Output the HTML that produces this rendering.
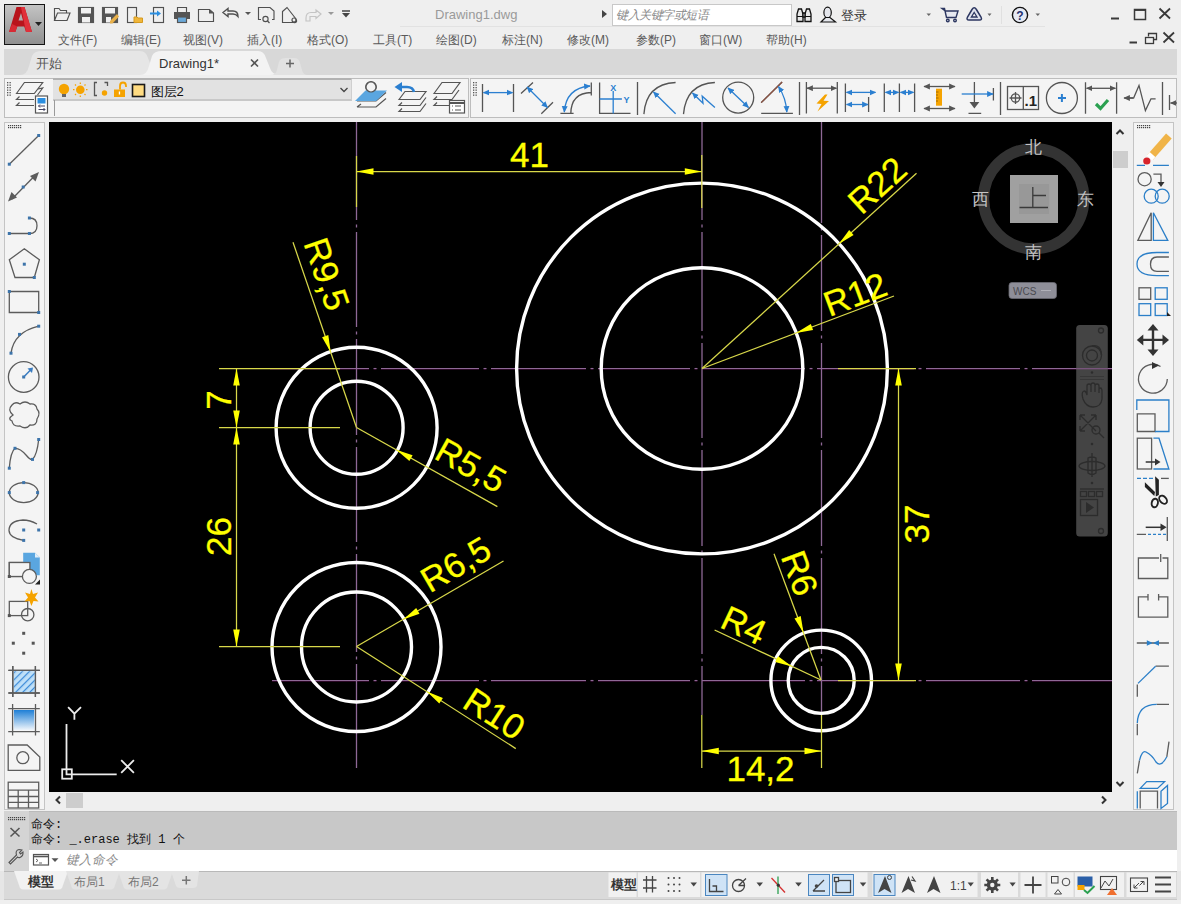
<!DOCTYPE html>
<html><head><meta charset="utf-8">
<style>
*{margin:0;padding:0;box-sizing:border-box}
html,body{width:1181px;height:904px;overflow:hidden;background:#efefef;font-family:"Liberation Sans",sans-serif;position:relative}
.a{position:absolute}
svg{position:absolute;left:0;top:0}
</style></head><body>
<!-- panels -->
<div class="a" style="left:4px;top:49px;width:1173px;height:26px;background:#d8d8d8"></div>
<div class="a" style="left:4px;top:78px;width:465px;height:40px;background:#f4f4f4;border:1px solid #bdbdbd"></div>
<div class="a" style="left:470px;top:78px;width:707px;height:40px;background:#f4f4f4;border:1px solid #bdbdbd"></div>
<div class="a" style="left:53px;top:78px;width:299px;height:23px;background:#e2e2e2;border-top:2px solid #b2b2b2;border-bottom:2px solid #c8c8c8;border-right:1px solid #cfcfcf"></div>
<div class="a" style="left:4px;top:122px;width:41px;height:688px;background:#f4f4f4;border:1px solid #c4c4c4"></div>
<div class="a" style="left:1133px;top:122px;width:41px;height:688px;background:#f4f4f4;border:1px solid #c4c4c4"></div>
<div class="a" style="left:49px;top:122px;width:1063px;height:670px;background:#000"></div>
<div class="a" style="left:1113px;top:151px;width:15px;height:17px;background:#cdcdcd"></div>
<div class="a" style="left:66px;top:793px;width:17px;height:15px;background:#cdcdcd"></div>
<div class="a" style="left:4px;top:811px;width:25px;height:60px;background:#d4d4d4"></div>
<div class="a" style="left:29px;top:811px;width:1148px;height:39px;background:#c8c8c8"></div>
<div class="a" style="left:29px;top:850px;width:1148px;height:21px;background:#fff"></div>
<div class="a" style="left:0;top:871px;width:1181px;height:33px;background:#e6e6e6"></div>
<svg class="cv" width="1181" height="904" style="position:absolute;left:0;top:0"><defs><clipPath id="cvc"><rect x="49" y="122" width="1063" height="670"/></clipPath></defs><g clip-path="url(#cvc)"><line x1="270" y1="369.5" x2="369" y2="369.5" stroke="#2a0824" stroke-width="1" /><line x1="270" y1="368.5" x2="369" y2="368.5" stroke="#8e6896" stroke-width="1.1" /><line x1="373.5" y1="369.5" x2="376.5" y2="369.5" stroke="#2a0824" stroke-width="1" /><line x1="373.5" y1="368.5" x2="376.5" y2="368.5" stroke="#8e6896" stroke-width="1.1" /><line x1="381" y1="369.5" x2="479" y2="369.5" stroke="#2a0824" stroke-width="1" /><line x1="381" y1="368.5" x2="479" y2="368.5" stroke="#8e6896" stroke-width="1.1" /><line x1="483.5" y1="369.5" x2="486.5" y2="369.5" stroke="#2a0824" stroke-width="1" /><line x1="483.5" y1="368.5" x2="486.5" y2="368.5" stroke="#8e6896" stroke-width="1.1" /><line x1="491" y1="369.5" x2="586" y2="369.5" stroke="#2a0824" stroke-width="1" /><line x1="491" y1="368.5" x2="586" y2="368.5" stroke="#8e6896" stroke-width="1.1" /><line x1="590.5" y1="369.5" x2="593.5" y2="369.5" stroke="#2a0824" stroke-width="1" /><line x1="590.5" y1="368.5" x2="593.5" y2="368.5" stroke="#8e6896" stroke-width="1.1" /><line x1="598" y1="369.5" x2="690" y2="369.5" stroke="#2a0824" stroke-width="1" /><line x1="598" y1="368.5" x2="690" y2="368.5" stroke="#8e6896" stroke-width="1.1" /><line x1="694.5" y1="369.5" x2="697.5" y2="369.5" stroke="#2a0824" stroke-width="1" /><line x1="694.5" y1="368.5" x2="697.5" y2="368.5" stroke="#8e6896" stroke-width="1.1" /><line x1="702" y1="369.5" x2="805" y2="369.5" stroke="#2a0824" stroke-width="1" /><line x1="702" y1="368.5" x2="805" y2="368.5" stroke="#8e6896" stroke-width="1.1" /><line x1="809.5" y1="369.5" x2="812.5" y2="369.5" stroke="#2a0824" stroke-width="1" /><line x1="809.5" y1="368.5" x2="812.5" y2="368.5" stroke="#8e6896" stroke-width="1.1" /><line x1="817" y1="369.5" x2="914" y2="369.5" stroke="#2a0824" stroke-width="1" /><line x1="817" y1="368.5" x2="914" y2="368.5" stroke="#8e6896" stroke-width="1.1" /><line x1="918.5" y1="369.5" x2="921.5" y2="369.5" stroke="#2a0824" stroke-width="1" /><line x1="918.5" y1="368.5" x2="921.5" y2="368.5" stroke="#8e6896" stroke-width="1.1" /><line x1="926" y1="369.5" x2="1020" y2="369.5" stroke="#2a0824" stroke-width="1" /><line x1="926" y1="368.5" x2="1020" y2="368.5" stroke="#8e6896" stroke-width="1.1" /><line x1="1024.5" y1="369.5" x2="1027.5" y2="369.5" stroke="#2a0824" stroke-width="1" /><line x1="1024.5" y1="368.5" x2="1027.5" y2="368.5" stroke="#8e6896" stroke-width="1.1" /><line x1="1032" y1="369.5" x2="1112" y2="369.5" stroke="#2a0824" stroke-width="1" /><line x1="1032" y1="368.5" x2="1112" y2="368.5" stroke="#8e6896" stroke-width="1.1" /><line x1="272" y1="681.5" x2="369" y2="681.5" stroke="#2a0824" stroke-width="1" /><line x1="272" y1="680.5" x2="369" y2="680.5" stroke="#8e6896" stroke-width="1.1" /><line x1="373.5" y1="681.5" x2="376.5" y2="681.5" stroke="#2a0824" stroke-width="1" /><line x1="373.5" y1="680.5" x2="376.5" y2="680.5" stroke="#8e6896" stroke-width="1.1" /><line x1="381" y1="681.5" x2="479" y2="681.5" stroke="#2a0824" stroke-width="1" /><line x1="381" y1="680.5" x2="479" y2="680.5" stroke="#8e6896" stroke-width="1.1" /><line x1="483.5" y1="681.5" x2="486.5" y2="681.5" stroke="#2a0824" stroke-width="1" /><line x1="483.5" y1="680.5" x2="486.5" y2="680.5" stroke="#8e6896" stroke-width="1.1" /><line x1="491" y1="681.5" x2="586" y2="681.5" stroke="#2a0824" stroke-width="1" /><line x1="491" y1="680.5" x2="586" y2="680.5" stroke="#8e6896" stroke-width="1.1" /><line x1="590.5" y1="681.5" x2="593.5" y2="681.5" stroke="#2a0824" stroke-width="1" /><line x1="590.5" y1="680.5" x2="593.5" y2="680.5" stroke="#8e6896" stroke-width="1.1" /><line x1="598" y1="681.5" x2="690" y2="681.5" stroke="#2a0824" stroke-width="1" /><line x1="598" y1="680.5" x2="690" y2="680.5" stroke="#8e6896" stroke-width="1.1" /><line x1="694.5" y1="681.5" x2="697.5" y2="681.5" stroke="#2a0824" stroke-width="1" /><line x1="694.5" y1="680.5" x2="697.5" y2="680.5" stroke="#8e6896" stroke-width="1.1" /><line x1="702" y1="681.5" x2="805" y2="681.5" stroke="#2a0824" stroke-width="1" /><line x1="702" y1="680.5" x2="805" y2="680.5" stroke="#8e6896" stroke-width="1.1" /><line x1="809.5" y1="681.5" x2="812.5" y2="681.5" stroke="#2a0824" stroke-width="1" /><line x1="809.5" y1="680.5" x2="812.5" y2="680.5" stroke="#8e6896" stroke-width="1.1" /><line x1="817" y1="681.5" x2="914" y2="681.5" stroke="#2a0824" stroke-width="1" /><line x1="817" y1="680.5" x2="914" y2="680.5" stroke="#8e6896" stroke-width="1.1" /><line x1="918.5" y1="681.5" x2="921.5" y2="681.5" stroke="#2a0824" stroke-width="1" /><line x1="918.5" y1="680.5" x2="921.5" y2="680.5" stroke="#8e6896" stroke-width="1.1" /><line x1="926" y1="681.5" x2="1020" y2="681.5" stroke="#2a0824" stroke-width="1" /><line x1="926" y1="680.5" x2="1020" y2="680.5" stroke="#8e6896" stroke-width="1.1" /><line x1="1024.5" y1="681.5" x2="1027.5" y2="681.5" stroke="#2a0824" stroke-width="1" /><line x1="1024.5" y1="680.5" x2="1027.5" y2="680.5" stroke="#8e6896" stroke-width="1.1" /><line x1="1032" y1="681.5" x2="1112" y2="681.5" stroke="#2a0824" stroke-width="1" /><line x1="1032" y1="680.5" x2="1112" y2="680.5" stroke="#8e6896" stroke-width="1.1" /><line x1="356.5" y1="122" x2="356.5" y2="220" stroke="#8e6896" stroke-width="1.3" /><line x1="356.5" y1="224.5" x2="356.5" y2="227.5" stroke="#8e6896" stroke-width="1.3" /><line x1="356.5" y1="232" x2="356.5" y2="327" stroke="#8e6896" stroke-width="1.3" /><line x1="356.5" y1="331.5" x2="356.5" y2="334.5" stroke="#8e6896" stroke-width="1.3" /><line x1="356.5" y1="339" x2="356.5" y2="435" stroke="#8e6896" stroke-width="1.3" /><line x1="356.5" y1="439.5" x2="356.5" y2="442.5" stroke="#8e6896" stroke-width="1.3" /><line x1="356.5" y1="447" x2="356.5" y2="542" stroke="#8e6896" stroke-width="1.3" /><line x1="356.5" y1="546.5" x2="356.5" y2="549.5" stroke="#8e6896" stroke-width="1.3" /><line x1="356.5" y1="554" x2="356.5" y2="652" stroke="#8e6896" stroke-width="1.3" /><line x1="356.5" y1="656.5" x2="356.5" y2="659.5" stroke="#8e6896" stroke-width="1.3" /><line x1="356.5" y1="664" x2="356.5" y2="768" stroke="#8e6896" stroke-width="1.3" /><line x1="702" y1="122" x2="702" y2="220" stroke="#8e6896" stroke-width="1.3" /><line x1="702" y1="224.5" x2="702" y2="227.5" stroke="#8e6896" stroke-width="1.3" /><line x1="702" y1="232" x2="702" y2="331" stroke="#8e6896" stroke-width="1.3" /><line x1="702" y1="335.5" x2="702" y2="338.5" stroke="#8e6896" stroke-width="1.3" /><line x1="702" y1="343" x2="702" y2="438" stroke="#8e6896" stroke-width="1.3" /><line x1="702" y1="442.5" x2="702" y2="445.5" stroke="#8e6896" stroke-width="1.3" /><line x1="702" y1="450" x2="702" y2="546" stroke="#8e6896" stroke-width="1.3" /><line x1="702" y1="550.5" x2="702" y2="553.5" stroke="#8e6896" stroke-width="1.3" /><line x1="702" y1="558" x2="702" y2="654" stroke="#8e6896" stroke-width="1.3" /><line x1="702" y1="658.5" x2="702" y2="661.5" stroke="#8e6896" stroke-width="1.3" /><line x1="702" y1="666" x2="702" y2="715" stroke="#8e6896" stroke-width="1.3" /><line x1="821.5" y1="122" x2="821.5" y2="223" stroke="#8e6896" stroke-width="1.3" /><line x1="821.5" y1="227.5" x2="821.5" y2="230.5" stroke="#8e6896" stroke-width="1.3" /><line x1="821.5" y1="235" x2="821.5" y2="331" stroke="#8e6896" stroke-width="1.3" /><line x1="821.5" y1="335.5" x2="821.5" y2="338.5" stroke="#8e6896" stroke-width="1.3" /><line x1="821.5" y1="343" x2="821.5" y2="438" stroke="#8e6896" stroke-width="1.3" /><line x1="821.5" y1="442.5" x2="821.5" y2="445.5" stroke="#8e6896" stroke-width="1.3" /><line x1="821.5" y1="450" x2="821.5" y2="546" stroke="#8e6896" stroke-width="1.3" /><line x1="821.5" y1="550.5" x2="821.5" y2="553.5" stroke="#8e6896" stroke-width="1.3" /><line x1="821.5" y1="558" x2="821.5" y2="654" stroke="#8e6896" stroke-width="1.3" /><line x1="821.5" y1="658.5" x2="821.5" y2="661.5" stroke="#8e6896" stroke-width="1.3" /><line x1="821.5" y1="666" x2="821.5" y2="715" stroke="#8e6896" stroke-width="1.3" /><circle cx="702" cy="368.5" r="185.4" fill="none" stroke="#fff" stroke-width="3.4"/><circle cx="702" cy="368.5" r="100.8" fill="none" stroke="#fff" stroke-width="3.4"/><circle cx="356.6" cy="427.7" r="80.5" fill="none" stroke="#fff" stroke-width="3.4"/><circle cx="356.6" cy="427.7" r="46.5" fill="none" stroke="#fff" stroke-width="3.4"/><circle cx="356.5" cy="647" r="84.5" fill="none" stroke="#fff" stroke-width="3.4"/><circle cx="356.5" cy="647" r="55" fill="none" stroke="#fff" stroke-width="3.4"/><circle cx="821.2" cy="680.4" r="50.3" fill="none" stroke="#fff" stroke-width="3.4"/><circle cx="821.2" cy="680.4" r="33" fill="none" stroke="#fff" stroke-width="3.4"/><line x1="356.5" y1="156" x2="356.5" y2="207" stroke="#d8d84a" stroke-width="1.25" /><line x1="701.8" y1="155" x2="701.8" y2="208" stroke="#d8d84a" stroke-width="1.25" /><line x1="356.5" y1="171.5" x2="701.8" y2="171.5" stroke="#d8d84a" stroke-width="1.25" /><polygon points="356.5,171.5 373.5,174.8 373.5,168.2" fill="#ffff00"/><polygon points="701.8,171.5 684.8,168.2 684.8,174.8" fill="#ffff00"/><text transform="translate(529.5,154.5) rotate(0)" x="0" y="12.5" text-anchor="middle" font-size="35" fill="#ffff00" stroke="#ffff00" stroke-width="0.3" font-family="Liberation Sans">41</text><line x1="219" y1="368.5" x2="340" y2="368.5" stroke="#d8d84a" stroke-width="1.25" /><line x1="219" y1="427.5" x2="340" y2="427.5" stroke="#d8d84a" stroke-width="1.25" /><line x1="219" y1="646.5" x2="340" y2="646.5" stroke="#d8d84a" stroke-width="1.25" /><line x1="236.5" y1="368.5" x2="236.5" y2="646.5" stroke="#d8d84a" stroke-width="1.25" /><polygon points="236.5,368.5 233.2,385.5 239.8,385.5" fill="#ffff00"/><polygon points="236.5,427.5 239.8,410.5 233.2,410.5" fill="#ffff00"/><polygon points="236.5,427.5 233.2,444.5 239.8,444.5" fill="#ffff00"/><polygon points="236.5,646.5 239.8,629.5 233.2,629.5" fill="#ffff00"/><text transform="translate(218,400) rotate(-90)" x="0" y="12.5" text-anchor="middle" font-size="35" fill="#ffff00" stroke="#ffff00" stroke-width="0.3" font-family="Liberation Sans">7</text><text transform="translate(218,536.5) rotate(-90)" x="0" y="12.5" text-anchor="middle" font-size="35" fill="#ffff00" stroke="#ffff00" stroke-width="0.3" font-family="Liberation Sans">26</text><line x1="838" y1="368.5" x2="916" y2="368.5" stroke="#d8d84a" stroke-width="1.25" /><line x1="838" y1="680.5" x2="916" y2="680.5" stroke="#d8d84a" stroke-width="1.25" /><line x1="898.5" y1="368.5" x2="898.5" y2="680.5" stroke="#d8d84a" stroke-width="1.25" /><polygon points="898.5,368.5 895.2,385.5 901.8,385.5" fill="#ffff00"/><polygon points="898.5,680.5 901.8,663.5 895.2,663.5" fill="#ffff00"/><text transform="translate(916.5,524) rotate(-90)" x="0" y="12.5" text-anchor="middle" font-size="35" fill="#ffff00" stroke="#ffff00" stroke-width="0.3" font-family="Liberation Sans">37</text><line x1="701.8" y1="715" x2="701.8" y2="768" stroke="#d8d84a" stroke-width="1.25" /><line x1="821.5" y1="715" x2="821.5" y2="768" stroke="#d8d84a" stroke-width="1.25" /><line x1="701.8" y1="751" x2="821.5" y2="751" stroke="#d8d84a" stroke-width="1.25" /><polygon points="701.8,751.0 718.8,754.3 718.8,747.7" fill="#ffff00"/><polygon points="821.5,751.0 804.5,747.7 804.5,754.3" fill="#ffff00"/><text transform="translate(760.5,768.5) rotate(0)" x="0" y="12.5" text-anchor="middle" font-size="35" fill="#ffff00" stroke="#ffff00" stroke-width="0.3" font-family="Liberation Sans">14,2</text><line x1="702" y1="368.5" x2="916.5" y2="173.3" stroke="#d8d84a" stroke-width="1.25" /><polygon points="838.8,244.0 853.6,235.0 849.2,230.1" fill="#ffff00"/><text transform="translate(877,185) rotate(-42.2)" x="0" y="12.5" text-anchor="middle" font-size="35" fill="#ffff00" stroke="#ffff00" stroke-width="0.3" font-family="Liberation Sans">R22</text><line x1="702" y1="368.5" x2="894" y2="296" stroke="#d8d84a" stroke-width="1.25" /><polygon points="796.0,333.0 813.1,330.1 810.8,323.9" fill="#ffff00"/><text transform="translate(855,294) rotate(-20.6)" x="0" y="12.5" text-anchor="middle" font-size="35" fill="#ffff00" stroke="#ffff00" stroke-width="0.3" font-family="Liberation Sans">R12</text><line x1="356.5" y1="427.5" x2="293" y2="242.3" stroke="#d8d84a" stroke-width="1.25" /><polygon points="330.7,352.3 328.3,335.1 322.1,337.3" fill="#ffff00"/><text transform="translate(327,274) rotate(71)" x="0" y="12.5" text-anchor="middle" font-size="35" fill="#ffff00" stroke="#ffff00" stroke-width="0.3" font-family="Liberation Sans">R9,5</text><line x1="356.5" y1="427.5" x2="497.4" y2="506.6" stroke="#d8d84a" stroke-width="1.25" /><polygon points="396.2,449.8 409.4,461.0 412.6,455.2" fill="#ffff00"/><text transform="translate(471,465) rotate(29.3)" x="0" y="12.5" text-anchor="middle" font-size="35" fill="#ffff00" stroke="#ffff00" stroke-width="0.3" font-family="Liberation Sans">R5,5</text><line x1="356.5" y1="646.5" x2="503.5" y2="561" stroke="#d8d84a" stroke-width="1.25" /><polygon points="403.2,619.4 419.5,613.7 416.2,608.0" fill="#ffff00"/><text transform="translate(455.5,564) rotate(-30.2)" x="0" y="12.5" text-anchor="middle" font-size="35" fill="#ffff00" stroke="#ffff00" stroke-width="0.3" font-family="Liberation Sans">R6,5</text><line x1="356.5" y1="646.5" x2="515.8" y2="748.6" stroke="#d8d84a" stroke-width="1.25" /><polygon points="426.8,691.6 439.3,703.5 442.9,698.0" fill="#ffff00"/><text transform="translate(494.5,713.5) rotate(32.7)" x="0" y="12.5" text-anchor="middle" font-size="35" fill="#ffff00" stroke="#ffff00" stroke-width="0.3" font-family="Liberation Sans">R10</text><line x1="821" y1="680" x2="774" y2="553.7" stroke="#d8d84a" stroke-width="1.25" /><polygon points="803.6,633.1 800.7,616.1 794.5,618.4" fill="#ffff00"/><text transform="translate(800,573) rotate(69.6)" x="0" y="12.5" text-anchor="middle" font-size="35" fill="#ffff00" stroke="#ffff00" stroke-width="0.3" font-family="Liberation Sans">R6</text><line x1="821" y1="680" x2="714.6" y2="630" stroke="#d8d84a" stroke-width="1.25" /><polygon points="792.0,666.4 778.1,656.2 775.2,662.1" fill="#ffff00"/><text transform="translate(744,625) rotate(25.2)" x="0" y="12.5" text-anchor="middle" font-size="35" fill="#ffff00" stroke="#ffff00" stroke-width="0.3" font-family="Liberation Sans">R4</text></g></svg>
<!-- title bar -->
<div class="a" style="left:4px;top:4px;width:41px;height:41px;border:1.5px solid #151515;background:linear-gradient(#c4c4c4,#a4a4a4 60%,#909090)"></div>
<svg width="1181" height="50">
<polygon points="9,32 16.5,7 24.5,7 32,32 26,32 24.2,26.5 17.3,26.5 15.3,32" fill="#b8141c"/>
<polygon points="21,7 24.5,7 32,32 26,32" fill="#e0303a"/>
<polygon points="12,24 17.3,26.5 15.3,32 9,32" fill="#d82a34"/>
<polygon points="18.5,20.5 21,13 23,20.5" fill="#b0b0b0"/>
<polygon points="35,22 42,22 38.5,26" fill="#222"/>
<!-- QAT icons -->
<g fill="none" stroke="#505050" stroke-width="1.15">
<!-- open -->
<path d="M54.5,20.5 V8.5 H59 L60.5,10.5 H66.5 V12.5 M54.5,20.5 L57.5,13 H70 L67,20.5 Z"/>
<!-- save -->
<rect x="78.5" y="7.5" width="15" height="15" fill="#555" stroke="#555"/>
<rect x="81" y="8" width="10" height="5.5" fill="#f0f0f0" stroke="none"/>
<rect x="82" y="17" width="8" height="5.5" fill="#f0f0f0" stroke="none"/>
<!-- saveas -->
<rect x="102.5" y="7.5" width="15" height="15" fill="#555" stroke="#555"/>
<rect x="105" y="8" width="10" height="5.5" fill="#f0f0f0" stroke="none"/>
<rect x="106" y="17" width="5" height="5.5" fill="#f0f0f0" stroke="none"/>
<polygon points="110,21 117,14 119,16.5 112.5,23.5 110,23.5" fill="#e8b04a" stroke="none"/>
<!-- open mobile -->
<rect x="127.5" y="7.5" width="9" height="15" />
<path d="M134,17 H137 L138,18 H142.5 V22.5 H134 Z" fill="#f0b63a" stroke="#d59a20" stroke-width="1"/>
<!-- export -->
<rect x="153.5" y="7.5" width="10" height="15"/>
<path d="M150,13.5 H158" stroke="#2b8ee0" stroke-width="2"/>
<polygon points="157,10.5 161,13.5 157,16.5" fill="#2b8ee0" stroke="none"/>
<!-- print -->
<path d="M177.5,12 V7.5 H186.5 V12"/>
<rect x="174" y="12" width="16" height="7" fill="#555" stroke="none"/>
<rect x="177.5" y="17" width="9" height="5.5" fill="#6aa8d8" stroke="#555"/>
<!-- new sheet -->
<path d="M198.5,9.5 H209.5 L213.5,13 V21.5 H198.5 Z"/>
<polygon points="209,9 214,13.5 209,13.5" fill="#555" stroke="none"/>
<!-- undo -->
<path d="M223,12.5 L228,8.5 V11 H233 Q238,11 238,16.5 Q236,14 233,14 H228 V16.5 Z" stroke-width="1.4"/>
<polygon points="245,12 251,12 248,15" fill="#555" stroke="none"/>
<!-- plot preview -->
<path d="M261,19.5 H258.5 V7.5 H270 L274,11 V19.5 H272"/>
<circle cx="265.5" cy="19" r="2.6"/>
<path d="M267.5,21 L269.5,23"/>
<!-- publish -->
<path d="M282.5,11.5 L287,7.5 L296,19 Q298,23 293.5,22.5 H282.5 Z"/>
<circle cx="294" cy="20" r="2"/>
<!-- redo gray -->
<path d="M321,14 L316,10 V12.5 H311 Q306,12.5 306,18 V21 H310 V16.5 H316 V18.5 Z" stroke="#c4c4c4"/>
<polygon points="328,12 334,12 331,15" fill="#999" stroke="none"/>
<path d="M342,11 H350" stroke="#444" stroke-width="1.5"/>
<polygon points="342,13 350,13 346,17.5" fill="#444" stroke="none"/>
</g>
<text x="435" y="19" font-size="13" fill="#9a9a9a" font-family="Liberation Sans">Drawing1.dwg</text>
<polygon points="602,10 607,14 602,18" fill="#444"/>
</svg>
<div class="a" style="left:612px;top:4px;width:180px;height:22px;background:#fff;border:1px solid #c8c8c8"></div>
<div class="a" style="left:616px;top:7px;font-size:12px;color:#888;font-style:italic;letter-spacing:-0.5px">键入关键字或短语</div>
<svg width="1181" height="50">
<g fill="#e8e8e8" stroke="#111" stroke-width="1.3">
<path d="M797,21.5 V14 L798.5,9 H801.5 L803,14 V21.5 Z"/><path d="M805,21.5 V14 L806.5,9 H809.5 L811,14 V21.5 Z"/>
<path d="M803,13 H805 V17 H803 Z"/>
</g>
<path d="M797,16.5 H803 M805,16.5 H811" stroke="#111" stroke-width="1"/>
<g fill="#e4e6ec" stroke="#111" stroke-width="1.2">
<ellipse cx="827.6" cy="12.5" rx="3.7" ry="5.3"/>
<path d="M825.5,17.5 L821,22 H835.5 L830,17.5 Z"/>
</g>
<text x="841" y="19.5" font-size="13" fill="#333" font-family="Liberation Sans">登录</text>
<polygon points="926.5,13.5 931,13.5 928.8,16" fill="#666"/>
<!-- cart -->
<g fill="#e6e8f0" stroke="#2c3660" stroke-width="1.4">
<path d="M942,8.5 H944.5 L946.5,17.5 H956 L958,11 H945.5 Z"/>
<circle cx="947.8" cy="20.5" r="1.3"/><circle cx="955" cy="20.5" r="1.3"/>
</g>
<!-- a360 -->
<path d="M972,9.5 Q974.2,6 976.4,9.5 L981,17 Q982.5,20 979.5,20 H969 Q966,20 967.5,17 Z" fill="#dfe3ee" stroke="#2c3660" stroke-width="1.5"/>
<path d="M974.2,12.5 L977,17 H971.4 Z" fill="#f0f0f0" stroke="#2c3660" stroke-width="1.3"/>
<polygon points="987.5,13.5 991.5,13.5 989.5,16" fill="#666"/>
<line x1="1001.5" y1="6" x2="1001.5" y2="24" stroke="#e0e0e0"/>
<circle cx="1020" cy="15" r="7.6" fill="#e6eaf4" stroke="#111" stroke-width="1.4"/>
<text x="1020" y="19.5" font-size="12" font-weight="bold" fill="#223070" text-anchor="middle" font-family="Liberation Sans">?</text>
<polygon points="1035.5,13.5 1040,13.5 1037.8,16" fill="#666"/>
<line x1="400" y1="26.5" x2="1045" y2="26.5" stroke="#e2e2e2"/>
<!-- window controls -->
<g stroke="#3a3a3a" stroke-width="1.5" fill="none">
<path d="M1111,18.5 H1119" stroke-width="2"/>
<rect x="1134.5" y="9.5" width="11" height="10"/><path d="M1134.5,10.2 H1145.5" stroke-width="1.5"/>
<path d="M1159.5,8.5 L1170,18.5 M1170,8.5 L1159.5,18.5" stroke-width="1.8"/>
<path d="M1129.5,42.5 H1137" stroke-width="2"/>
<rect x="1145.5" y="37.5" width="8" height="6" stroke-width="1.3"/><path d="M1148.5,36.5 V33.5 H1156.5 V39.5 H1154" stroke-width="1.3"/>
<path d="M1163.5,32.5 L1174,42.5 M1174,32.5 L1163.5,42.5" stroke-width="1.8"/>
</g>
</svg>
<!-- menu -->
<div class="a" style="top:31.5px;left:0;width:820px;height:18px;font-size:12px;color:#5a5a5a;white-space:nowrap">
<span class="a" style="left:58px">文件(F)</span><span class="a" style="left:121px">编辑(E)</span><span class="a" style="left:183px">视图(V)</span><span class="a" style="left:247px">插入(I)</span><span class="a" style="left:307px">格式(O)</span><span class="a" style="left:373px">工具(T)</span><span class="a" style="left:436px">绘图(D)</span><span class="a" style="left:502px">标注(N)</span><span class="a" style="left:567px">修改(M)</span><span class="a" style="left:636px">参数(P)</span><span class="a" style="left:699px">窗口(W)</span><span class="a" style="left:766px">帮助(H)</span>
</div>
<!-- tabs -->
<svg width="1181" height="80">
<path d="M20,75 Q27,75 29,66 L32,56 Q34,51 42,51 H140 Q146,51 148,58 L152,68 Q154,75 162,75 Z" fill="#e6e6e6"/>
<path d="M140,75 Q147,75 149,66 L152,56 Q154,51 162,51 H258 Q264,51 266,58 L270,68 Q272,75 280,75 Z" fill="#f3f3f3"/>
<path d="M270,75 Q276,75 277,70 L279,62 Q280,58 286,58 H294 Q299,58 300,63 L302,70 Q303,75 308,75 Z" fill="#e2e2e2"/>
<path d="M251,59.5 L258,66.5 M258,59.5 L251,66.5" stroke="#555" stroke-width="1.6"/>
<path d="M290,59.5 V67.5 M286,63.5 H294" stroke="#666" stroke-width="1.5"/>
</svg>
<div class="a" style="left:36px;top:56px;font-size:12.5px;color:#555">开始</div>
<div class="a" style="left:159px;top:56px;font-size:13px;color:#333">Drawing1*</div>

<div class="a" style="left:150.5px;top:82.5px;font-size:13px;color:#111">图层2</div>
<svg width="1181" height="120">
<defs>
<pattern id="grip" width="2.8" height="2.6" patternUnits="userSpaceOnUse"><rect width="1.6" height="1.6" fill="#4a4a4a"/></pattern>
<marker id="ab" viewBox="0 0 10 10" refX="9" refY="5" markerWidth="5" markerHeight="5" orient="auto-start-reverse"><path d="M10,5 L0,0.5 L0,9.5 Z" fill="#2b7fd0"/></marker>
<marker id="ag" viewBox="0 0 10 10" refX="9" refY="5" markerWidth="5" markerHeight="5" orient="auto-start-reverse"><path d="M10,5 L0,0.5 L0,9.5 Z" fill="#555"/></marker>
</defs>
<rect x="7" y="82.0" width="1.3" height="1.3" fill="#555"/><rect x="7" y="84.5" width="1.3" height="1.3" fill="#555"/><rect x="7" y="87.0" width="1.3" height="1.3" fill="#555"/><rect x="7" y="89.5" width="1.3" height="1.3" fill="#555"/><rect x="7" y="92.0" width="1.3" height="1.3" fill="#555"/><rect x="7" y="94.5" width="1.3" height="1.3" fill="#555"/><rect x="9.5" y="82.0" width="1.3" height="1.3" fill="#555"/><rect x="9.5" y="84.5" width="1.3" height="1.3" fill="#555"/><rect x="9.5" y="87.0" width="1.3" height="1.3" fill="#555"/><rect x="9.5" y="89.5" width="1.3" height="1.3" fill="#555"/><rect x="9.5" y="92.0" width="1.3" height="1.3" fill="#555"/><rect x="9.5" y="94.5" width="1.3" height="1.3" fill="#555"/>
<rect x="473" y="82.0" width="1.3" height="1.3" fill="#555"/><rect x="473" y="84.5" width="1.3" height="1.3" fill="#555"/><rect x="473" y="87.0" width="1.3" height="1.3" fill="#555"/><rect x="473" y="89.5" width="1.3" height="1.3" fill="#555"/><rect x="473" y="92.0" width="1.3" height="1.3" fill="#555"/><rect x="473" y="94.5" width="1.3" height="1.3" fill="#555"/><rect x="475.5" y="82.0" width="1.3" height="1.3" fill="#555"/><rect x="475.5" y="84.5" width="1.3" height="1.3" fill="#555"/><rect x="475.5" y="87.0" width="1.3" height="1.3" fill="#555"/><rect x="475.5" y="89.5" width="1.3" height="1.3" fill="#555"/><rect x="475.5" y="92.0" width="1.3" height="1.3" fill="#555"/><rect x="475.5" y="94.5" width="1.3" height="1.3" fill="#555"/>
<g fill="none" stroke="#555" stroke-width="1.2">
<!-- layer properties -->
<path d="M16.5,93.5 L24.4,82.5 H42.7 L34.3,93.5 Z"/>
<path d="M38,89 L42.7,88 L37.5,95"/>
<path d="M19.5,96.5 L16.5,99.5 H34"/><path d="M19.5,102.5 L16.5,105.5 H34"/>
<rect x="35.5" y="96" width="12" height="17" fill="#fff"/>
<rect x="37.5" y="98" width="8" height="5.5" fill="#2b8ee0" stroke="none"/>
<path d="M38.5,106 H45 M40,104.5 L38.5,106 L40,107.5 M38.5,109.5 H45 M43.5,108 L45,109.5 L43.5,111" stroke="#446" stroke-width="1"/>
</g>
<line x1="54.5" y1="100" x2="54.5" y2="116" stroke="#9a9a9a"/>
<!-- bulb -->
<circle cx="64" cy="89" r="5.2" fill="#f5a300"/><rect x="62" y="94" width="4" height="3" fill="#666"/>
<!-- sun -->
<circle cx="80.3" cy="89.7" r="4.3" fill="#f5a300"/>
<g stroke="#f5a300" stroke-width="1.2"><path d="M80.3,82.5 V84 M80.3,95.5 V97 M73,89.7 H74.5 M86,89.7 H87.5 M75,84.5 L76,85.5 M84.5,94 L85.5,95 M85.5,84.5 L84.5,85.5 M76,94 L75,95"/></g>
<!-- vp freeze -->
<g fill="none" stroke="#555" stroke-width="1.3"><path d="M97,82.5 H94.5 V95.5 H97 M104.5,82.5 H107.5 V86"/></g>
<circle cx="104.5" cy="93" r="2.7" fill="#f5a300"/>
<!-- lock -->
<rect x="114" y="89.5" width="11" height="7.5" fill="#f5a300"/>
<path d="M120,89.5 V86 Q120,82.5 123,82.5 Q126,82.5 126,86 V87" fill="none" stroke="#f5a300" stroke-width="1.8"/>
<rect x="118.8" y="91.5" width="1.3" height="3" fill="#fff"/>
<!-- color sq -->
<rect x="132.5" y="84.5" width="12" height="12" fill="#ffdc82" stroke="#1a1a1a" stroke-width="1.6"/>
<path d="M340.5,88 L344,91.5 L347.5,88" fill="none" stroke="#444" stroke-width="1.3"/>
<!-- make current -->
<g fill="none" stroke="#555" stroke-width="1.2">
<circle cx="371" cy="87" r="5.3" fill="#f3f3f3"/>
<path d="M357,101 L361,98 M357,101 H376 L386,92.5 M357,107 L361,104 M357,107 H376 L386,98.5"/>
</g>
<polygon points="355,101 365.5,90.5 387,90.5 376.2,101" fill="#5aa6e0"/>
<circle cx="371" cy="87" r="5" fill="#f3f3f3" stroke="#555" stroke-width="1.2"/>
<!-- previous -->
<g fill="none" stroke="#555" stroke-width="1.2">
<path d="M399,99.5 L405,91.5 H426 L420,99.5 Z"/><path d="M402,102.5 L399,105.5 H420 L426,97.5"/><path d="M402,108.5 L399,111.5 H420 L426,103.5"/>
</g>
<path d="M400,87 H407 Q413,87 414,92" fill="none" stroke="#2b7fd0" stroke-width="2.6"/>
<polygon points="394.5,87 402,82 402,92" fill="#2b7fd0"/>
<!-- state -->
<g fill="none" stroke="#555" stroke-width="1.2">
<path d="M434,93.5 L442,82.5 H460 L452,93.5 Z"/><path d="M437,96.5 L434,99.5 H452 L459,90"/><path d="M437,102.5 L434,105.5 H449"/>
<rect x="449.5" y="100.5" width="15" height="12.5" fill="#fff"/>
<path d="M449.5,103 H464.5" stroke-width="2"/>
<path d="M452,106 H453 M455,106 H461 M452,110 H453 M455,110 H461"/>
</g>
<!-- dim toolbar -->
<g fill="none" stroke="#555" stroke-width="1.3">
<path d="M482.5,84 V112 M513.5,84 V112"/>
<path d="M521,93.5 L533,82.5 M541.3,113.7 L553,102.2"/>
<path d="M560.4,113.4 H573.6 M591.3,82.5 V95.4 M570.8,113.7 Q571,93 591.3,92.5"/>
<path d="M599.6,82.5 V113.4 H630.5"/>
<path d="M637.5,82 V115 M799.5,82 V115"/>
<path d="M643.9,114.1 Q646,84 675.6,82.5"/>
<path d="M683.5,114.1 Q686,84 714.9,82.5"/>
<circle cx="738.2" cy="97.6" r="15.5"/>
<path d="M761.2,102.6 L782.1,82 M761.2,113.4 H792.9" stroke="#555"/>
<path d="M761.2,102.6 L782.1,82" stroke="#8a5040"/>
</g>
<g fill="none" stroke="#2b7fd0" stroke-width="1.3">
<path d="M483.5,92.6 H512.5" marker-start="url(#ab)" marker-end="url(#ab)"/>
<path d="M527,87 L547.5,107.5" marker-start="url(#ab)" marker-end="url(#ab)"/>
<path d="M564.3,112 Q566,88 590,86" marker-start="url(#ab)" marker-end="url(#ab)"/>
<path d="M613.2,91 V113.4 M599.6,99 H621.9"/>
<path d="M653.5,92 L675.6,113.7" marker-start="url(#ab)"/>
<path d="M692.5,93 L703,103.3 L702.2,96.2 L714.9,107.4" marker-start="url(#ab)"/>
<path d="M728,88 L748.5,107.5" marker-start="url(#ab)" marker-end="url(#ab)"/>
<path d="M778.5,86.5 Q786,98 786.8,112" marker-start="url(#ab)" marker-end="url(#ab)"/>
</g>
<text x="613.2" y="91" font-size="9" font-weight="bold" fill="#2b7fd0" text-anchor="middle" font-family="Liberation Sans">X</text>
<text x="626.5" y="103" font-size="9" font-weight="bold" fill="#2b7fd0" text-anchor="middle" font-family="Liberation Sans">Y</text>
<!-- quick dim etc -->
<g fill="none" stroke="#555" stroke-width="1.3">
<path d="M806.4,82 V113.6 M837.3,82 V113.6"/>
<path d="M845.4,83.6 V112 M868.6,97 V112"/>
<path d="M884.3,83.6 V112 M899.4,83.6 V112 M914.6,83.6 V112"/>
<path d="M974.4,82 V106 M968.5,113.3 H981.2 M993.4,88 V100.5"/>
<path d="M1000.5,82 V115 M1162.5,82 V115"/>
<rect x="1007.5" y="86.5" width="31" height="23"/><path d="M1023.3,86.5 V109.5"/>
<circle cx="1015.5" cy="98" r="4.2"/><path d="M1009.5,98 H1021.5 M1015.5,92 V104"/>
<circle cx="1061.9" cy="98" r="15.5"/>
<path d="M1085.5,82.3 V113.8 M1116.6,82.3 V113.8"/>
<path d="M1128,98 H1133.6 L1139,85.4 L1145.4,110.6 L1151,98.8 H1155.6"/>
<path d="M1169.5,95 V110"/>
</g>
<g fill="none" stroke="#555" stroke-width="1.3">
<path d="M807,88.2 H836.5" marker-start="url(#ag)" marker-end="url(#ag)"/>
<path d="M924,86.5 H955" marker-start="url(#ag)" marker-end="url(#ag)"/>
<path d="M924,108.5 H955" marker-start="url(#ag)" marker-end="url(#ag)"/>
<path d="M1086.5,88.3 H1115.5" marker-start="url(#ag)" marker-end="url(#ag)"/>
<path d="M1124,98 H1133" marker-start="url(#ag)"/>
<path d="M1170.5,103 H1177" marker-start="url(#ag)"/>
</g>
<polygon points="974.4,108.5 969.5,102 979.3,102" fill="#555"/>
<g fill="none" stroke="#2b7fd0" stroke-width="1.3">
<path d="M846.5,92.4 H875.5" marker-start="url(#ab)" marker-end="url(#ab)"/>
<path d="M846.5,104.5 H868" marker-start="url(#ab)" marker-end="url(#ab)"/>
<path d="M885.5,92.4 H898.5" marker-start="url(#ab)" marker-end="url(#ab)"/><path d="M900.5,92.4 H913.5" marker-start="url(#ab)" marker-end="url(#ab)"/>
<path d="M961.7,94 H993" marker-end="url(#ab)"/>
<path d="M1058,98 H1066 M1061.9,94 V102" stroke-width="2"/>
</g>
<polygon points="825,94.5 816.5,103.5 821.5,104 817.5,111.5 829,101 823.5,100.8 827.5,94.5" fill="#f5a300"/>
<rect x="936" y="88.7" width="6" height="17" fill="#f5a300"/>
<path d="M936,92 H938.5 M936,95 H938 M936,98 H938.5 M936,101 H938" stroke="#8a5a00" stroke-width="0.8"/>
<text x="1024.5" y="105.5" font-size="15" font-weight="bold" fill="#222" font-family="Liberation Sans">.1</text>
<path d="M1096,104 L1100.5,108.5 L1108,100" fill="none" stroke="#2aa050" stroke-width="3.2"/>
</svg>

<svg width="60" height="904">
<defs>
<pattern id="gripH" width="2.6" height="2.8" patternUnits="userSpaceOnUse"><rect width="1.6" height="1.6" fill="#4a4a4a"/></pattern>
<pattern id="hatch" width="5" height="5" patternUnits="userSpaceOnUse" patternTransform="rotate(45)"><rect width="5" height="5" fill="#bfe0f8"/><rect width="1.2" height="5" fill="#3a8ad8"/></pattern>
<linearGradient id="grad1" x1="0" y1="0" x2="0" y2="1"><stop offset="0" stop-color="#1e7fd6"/><stop offset="1" stop-color="#f4f8fc"/></linearGradient>
</defs>
<rect x="8" y="125" width="1.2" height="1.2" fill="#444"/><rect x="8" y="127" width="1.2" height="1.2" fill="#444"/><rect x="10" y="125" width="1.2" height="1.2" fill="#444"/><rect x="10" y="127" width="1.2" height="1.2" fill="#444"/><rect x="12" y="125" width="1.2" height="1.2" fill="#444"/><rect x="12" y="127" width="1.2" height="1.2" fill="#444"/><rect x="14" y="125" width="1.2" height="1.2" fill="#444"/><rect x="14" y="127" width="1.2" height="1.2" fill="#444"/><rect x="16" y="125" width="1.2" height="1.2" fill="#444"/><rect x="16" y="127" width="1.2" height="1.2" fill="#444"/><rect x="18" y="125" width="1.2" height="1.2" fill="#444"/><rect x="18" y="127" width="1.2" height="1.2" fill="#444"/><rect x="20" y="125" width="1.2" height="1.2" fill="#444"/><rect x="20" y="127" width="1.2" height="1.2" fill="#444"/>
<g fill="none" stroke="#5c5c5c" stroke-width="1.3">
<path d="M9.3,164.2 L38.7,135.5"/>
<path d="M12,199 L35.5,175"/>
<path d="M9.3,233.5 H29.4 M29.4,218 Q37,218 37,225.7 Q37,233.5 29.4,233.5"/>
<path d="M24.3,248.8 L39.4,259.8 L34.3,277.5 H15 L9.3,259.8 Z"/>
<path d="M9.3,291.5 H38.7 V312.5 H9.3 Z"/>
<path d="M11,353.2 Q14,332 38.7,326.2"/>
<circle cx="23.7" cy="377" r="15.3"/>
<path d="M13,415 Q7,410 12,405 Q15,401 20,404 Q25,400 30,404 Q36,403 37,409 Q41,413 37,419 Q37,426 30,425 Q26,430 20,426 Q13,427 12,421 Q7,419 13,415 Z"/>
<path d="M9.3,468.2 Q10.5,452 15,448.3 Q20,448 26,455 Q30,460 32.5,459.4 Q37,455 38.7,439.5"/>
<ellipse cx="23.7" cy="492.6" rx="14.4" ry="10"/>
<path d="M37,524 Q30,520 23,520 Q9,521 9,530.5 Q9.5,538 23.7,540.4"/>
<rect x="9.3" y="562.5" width="20.6" height="14"/>
<rect x="9.3" y="601.4" width="18.4" height="14.2"/>
<circle cx="27.7" cy="614.7" r="6.2"/>
<path d="M8.4,670.4 H39.8 M8.4,693 H39.8 M12.8,666 V697 M35.4,666 V697"/>
<path d="M8.2,708.6 H39.8 M8.2,731.6 H39.8 M12.6,704 V735.5 M35.5,704 V735.5"/>
<path d="M8.2,745 H27.2 L39.8,757 V770.3 H8.2 Z"/>
<circle cx="22.8" cy="757.7" r="6"/>
<rect x="8.2" y="782.2" width="30.5" height="25.8"/>
<path d="M8.2,790.2 H38.7 M8.2,796.5 H38.7 M8.2,802.4 H38.7 M18.2,790.2 V808 M28.5,790.2 V808"/>
</g>
<polygon points="8,201.5 11.5,192 17,197.5" fill="#5c5c5c"/>
<polygon points="39,172 35.5,181.5 30,176" fill="#5c5c5c"/>
<rect x="13.8" y="671.2" width="21" height="21" fill="url(#hatch)"/>
<path d="M8.4,670.4 H39.8 M8.4,693 H39.8 M12.8,666 V697 M35.4,666 V697" stroke="#5c5c5c" stroke-width="1.3"/>
<rect x="13.9" y="710" width="20.3" height="20.5" fill="url(#grad1)"/>
<path d="M23.2,552.7 H35 L39.8,557.5 V575.3 H23.2 Z" fill="#5aa6e0"/>
<path d="M35,552.7 V557.5 H39.8" fill="#dfeefa"/>
<rect x="9.3" y="562.5" width="20.6" height="14" fill="#f4f4f4" stroke="#5c5c5c" stroke-width="1.3"/>
<circle cx="29.4" cy="576.4" r="7" fill="#f4f4f4" stroke="#5c5c5c" stroke-width="1.3"/>
<polygon points="40,579.5 40,584.5 35,584.5" fill="#222"/>
<polygon points="31.4,589 33,594 38,592.5 35,597.4 38.5,601.5 33.5,601 31.4,606 29.5,601 24.5,601.5 28,597.4 25,592.5 30,594" fill="#f5a300"/>
<g fill="#3d74aa">
<rect x="7.8" y="162.7" width="3" height="3"/><rect x="37.2" y="134" width="3" height="3"/>
<rect x="21.7" y="185.5" width="3" height="3"/>
<rect x="7.8" y="232" width="3" height="3"/><rect x="27.9" y="232" width="3" height="3"/><rect x="27.9" y="216.5" width="3" height="3"/>
<rect x="22.8" y="262.7" width="3" height="3"/><rect x="32.8" y="276" width="3" height="3"/>
<rect x="7.8" y="290" width="3" height="3"/><rect x="37.2" y="311" width="3" height="3"/>
<rect x="9.5" y="351.7" width="3" height="3"/><rect x="18" y="332.9" width="3" height="3"/><rect x="37.2" y="324.7" width="3" height="3"/>
<rect x="22.2" y="375.5" width="3" height="3"/>
<rect x="7.8" y="466.7" width="3" height="3"/><rect x="13.5" y="446.8" width="3" height="3"/><rect x="31" y="457.9" width="3" height="3"/><rect x="37.2" y="438" width="3" height="3"/>
<rect x="22.2" y="481.1" width="3" height="3"/><rect x="7.8" y="491.1" width="3" height="3"/><rect x="36.1" y="491.1" width="3" height="3"/>
<rect x="22.2" y="528.5" width="3" height="3"/><rect x="37.2" y="528.5" width="3" height="3"/><rect x="22.2" y="538.9" width="3" height="3"/>
</g>
<path d="M23.7,377 L31,369.5" stroke="#3a7cc0" stroke-width="1.5"/><polygon points="33,367.5 27.5,368.5 32,373" fill="#3a7cc0"/>
<g fill="#555">
<rect x="7.8" y="575" width="3" height="3"/><rect x="7.8" y="614.1" width="3" height="3"/>
<rect x="22.2" y="631.8" width="3" height="3"/><rect x="11.8" y="641.7" width="3" height="3"/><rect x="31.7" y="641.7" width="3" height="3"/><rect x="22.2" y="651.7" width="3" height="3"/>
</g>
</svg>

<svg width="1181" height="904">
<rect x="1137" y="125" width="1.2" height="1.2" fill="#444"/><rect x="1137" y="127" width="1.2" height="1.2" fill="#444"/><rect x="1139" y="125" width="1.2" height="1.2" fill="#444"/><rect x="1139" y="127" width="1.2" height="1.2" fill="#444"/><rect x="1141" y="125" width="1.2" height="1.2" fill="#444"/><rect x="1141" y="127" width="1.2" height="1.2" fill="#444"/><rect x="1143" y="125" width="1.2" height="1.2" fill="#444"/><rect x="1143" y="127" width="1.2" height="1.2" fill="#444"/><rect x="1145" y="125" width="1.2" height="1.2" fill="#444"/><rect x="1145" y="127" width="1.2" height="1.2" fill="#444"/><rect x="1147" y="125" width="1.2" height="1.2" fill="#444"/><rect x="1147" y="127" width="1.2" height="1.2" fill="#444"/><rect x="1149" y="125" width="1.2" height="1.2" fill="#444"/><rect x="1149" y="127" width="1.2" height="1.2" fill="#444"/>
<!-- erase -->
<path d="M1150,157.5 L1168.9,136" stroke="#f0b448" stroke-width="7.5"/>
<path d="M1149.5,158 L1152.5,154.5" stroke="#fff" stroke-width="7.5"/>
<circle cx="1146.8" cy="161" r="3.6" fill="#d8232a"/>
<path d="M1136.8,165.3 H1145 M1153,165.3 H1168.9" stroke="#2b7fc8" stroke-width="1.3"/>
<g fill="none" stroke="#5c5c5c" stroke-width="1.3">
<circle cx="1144.6" cy="179.2" r="6.6"/>
<path d="M1153.4,174.1 H1161 V182"/>
<path d="M1137.9,240.4 L1151.2,212.8 V240.4 Z"/>
<path d="M1168.9,257 H1157 Q1150.5,257 1150.5,264.2 Q1150.5,271.3 1157,271.3 H1168.9"/>
<rect x="1139" y="287.8" width="11.7" height="11.5"/>
<path d="M1137.3,413.9 H1155 V431.5 H1137.3 Z"/>
<rect x="1137.3" y="438.2" width="14.3" height="30.8"/>
<path d="M1153,378 m0,0" />
<path d="M1160.5,366.5 A14.4,14.4 0 1 0 1167.3,379"/>
<path d="M1159,558 H1138.4 V578.5 H1167.8 V558 H1162.5 M1160.7,554 V562"/>
<path d="M1148.3,596.9 H1138.4 V617.2 H1167.8 V596.9 H1158.3 M1148,594 V600.6 M1158.6,594 V600.6"/>
<path d="M1136.8,643 H1168.9"/>
<path d="M1155.6,666.2 H1168.9 M1137.3,684.5 V696.7"/>
<path d="M1156.7,704.3 H1169 M1137.3,723.7 V735.2"/>
<path d="M1137.3,773.3 L1139.5,760.3 M1166.8,756.8 L1169,741.7"/>
<path d="M1140.2,808.5 V791.2 H1157.5 V808.5"/>
<path d="M1136.8,534.4 H1146 M1167.3,517 V541"/>
<path d="M1161,478.4 H1168.8"/>
</g>
<g fill="none" stroke="#2b7fc8" stroke-width="1.3">
<circle cx="1151.2" cy="196.2" r="7"/><circle cx="1162.2" cy="196.2" r="7"/>
<path d="M1153.4,212.8 V240.4 H1167.8 Z"/>
<path d="M1168.9,252.5 H1157 Q1137,252.5 1137,264.1 Q1137,275.7 1157,275.7 H1168.9"/>
<rect x="1155.2" y="287.8" width="12" height="11.5"/><rect x="1139" y="303.7" width="11.7" height="11.8"/><rect x="1155.2" y="303.7" width="12" height="11.8"/>
<path d="M1136.8,410 V400 H1168.9 V431.5 H1155"/>
<path d="M1153.4,438.2 H1159 L1168.9,469 H1153.4"/>
<path d="M1137,478.4 H1153.5" stroke-dasharray="4,2"/>
<path d="M1148,534.4 H1167" stroke-dasharray="3,2"/>
<path d="M1138,683.4 L1155.6,666.2"/>
<path d="M1137.3,723 Q1138,704.3 1156.7,704.3"/>
<path d="M1139.5,760.3 Q1142,750 1146,752 Q1152,755 1156,762 Q1161,768 1166.8,756.8"/>
<path d="M1140.2,788.4 L1146.7,781.6 H1164.6 L1157.5,788.4 Z M1161,791.2 L1167.5,785.5 V803.4 L1161,808.5 Z M1137.3,791.2 V808.5"/>
</g>
<polygon points="1157.5,182 1164.5,182 1161,187" fill="#333"/>
<polygon points="1167,312 1171,316 1167,316" fill="#222"/>
<!-- move -->
<g fill="#333">
<path d="M1151.8,328 H1154.2 V338.7 H1165 V341.1 H1154.2 V352 H1151.8 V341.1 H1141 V338.7 H1151.8 Z"/>
<polygon points="1153,324 1147.5,330.5 1158.5,330.5"/><polygon points="1153,356 1147.5,349.5 1158.5,349.5"/>
<polygon points="1136.8,339.9 1143.3,334.4 1143.3,345.4"/><polygon points="1169,339.9 1162.5,334.4 1162.5,345.4"/>
<polygon points="1152,362 1159,365.5 1152,369"/>
</g>
<polygon points="1143.5,462 1149,462" />
<path d="M1145.7,462 H1156" stroke="#333" stroke-width="1.5"/><polygon points="1160.5,462 1155,458.5 1155,465.5" fill="#333"/>
<path d="M1145.7,527.3 H1162" stroke="#333" stroke-width="1.5"/><polygon points="1166.6,527.3 1160.5,523.5 1160.5,531" fill="#333"/>
<!-- scissors -->
<polygon points="1155.1,476.2 1158.9,479.7 1158.9,495 1155.8,496.5" fill="#222"/>
<polygon points="1144.9,482.2 1155,492 1154.3,496 1144.9,487" fill="#222"/>
<ellipse cx="1154.8" cy="503" rx="3.1" ry="4.3" fill="none" stroke="#222" stroke-width="1.9" transform="rotate(12 1154.8 503)"/>
<ellipse cx="1163.1" cy="499.7" rx="3.2" ry="4.6" fill="none" stroke="#222" stroke-width="1.9" transform="rotate(-42 1163.1 499.7)"/>
<!-- join -->
<polygon points="1146.8,640.2 1152.9,643 1146.8,645.8" fill="#2b7fc8"/><polygon points="1159,640.2 1152.9,643 1159,645.8" fill="#2b7fc8"/>
</svg>

<div class="a" style="left:4px;top:871px;width:1173px;height:29px;background:#dadada"></div>
<div class="a" style="left:0;top:900px;width:1181px;height:4px;background:#efefef"></div>
<div class="a" style="left:29px;top:811px;width:1148px;height:1px;background:#bababa"></div>
<div class="a" style="left:4px;top:871px;width:1173px;height:1px;background:#b8b8b8"></div>
<div class="a" style="left:4px;top:899px;width:1173px;height:1px;background:#c8c8c8"></div>
<div class="a" style="left:31px;top:818px;font-family:'Liberation Mono',monospace;font-size:12px;color:#111;line-height:14.5px;white-space:pre">命令:
命令: _.erase 找到 1 个</div>
<div class="a" style="left:66px;top:852px;font-size:12.5px;color:#8a8a8a;font-style:italic">键入命令</div>
<svg width="1181" height="904">
<rect x="8" y="817" width="1.2" height="1.2" fill="#444"/><rect x="8" y="819" width="1.2" height="1.2" fill="#444"/><rect x="10" y="817" width="1.2" height="1.2" fill="#444"/><rect x="10" y="819" width="1.2" height="1.2" fill="#444"/><rect x="12" y="817" width="1.2" height="1.2" fill="#444"/><rect x="12" y="819" width="1.2" height="1.2" fill="#444"/><rect x="14" y="817" width="1.2" height="1.2" fill="#444"/><rect x="14" y="819" width="1.2" height="1.2" fill="#444"/><rect x="16" y="817" width="1.2" height="1.2" fill="#444"/><rect x="16" y="819" width="1.2" height="1.2" fill="#444"/><rect x="18" y="817" width="1.2" height="1.2" fill="#444"/><rect x="18" y="819" width="1.2" height="1.2" fill="#444"/><rect x="20" y="817" width="1.2" height="1.2" fill="#444"/><rect x="20" y="819" width="1.2" height="1.2" fill="#444"/><rect x="22" y="817" width="1.2" height="1.2" fill="#444"/><rect x="22" y="819" width="1.2" height="1.2" fill="#444"/><rect x="24" y="817" width="1.2" height="1.2" fill="#444"/><rect x="24" y="819" width="1.2" height="1.2" fill="#444"/>
<path d="M10.5,828 L19.5,836.5 M19.5,828 L10.5,836.5" stroke="#555" stroke-width="1.6"/>
<path d="M9,862.5 L16.5,855 Q15,850.5 19,849.5 Q21,849.5 22,850 L19.5,852.5 L20.5,854 L23,852 Q23.5,856 20,857.5 Q18.5,858 17.5,857 L10.5,864 Z" fill="none" stroke="#555" stroke-width="1.1"/>
<rect x="33.5" y="854.5" width="15" height="10.5" fill="none" stroke="#555" stroke-width="1.2"/>
<path d="M33.5,856.5 H48.5" stroke="#555" stroke-width="1.6"/>
<path d="M36,859 L38,860.5 L36,862 M39,863 H42" fill="none" stroke="#555" stroke-width="0.9"/>
<polygon points="51.5,858.3 58.5,858.3 55,862" fill="#555"/>
<!-- layout tabs -->
<path d="M14,871 L20,888 Q21,889.5 24,889.5 H58 Q61,889.5 62,888 L68,871 Z" fill="#f2f2f2"/>
<path d="M66,871 L72,888 Q73,889.5 76,889.5 H110 Q113,889.5 114,888 L120,871 Z" fill="#e4e4e4"/>
<path d="M118,871 L124,888 Q125,889.5 128,889.5 H163 Q166,889.5 167,888 L173,871 Z" fill="#e4e4e4"/>
<path d="M171,871 L176,886 Q177,888 180,888 H193 Q196,888 197,886 L199,871 Z" fill="#e4e4e4"/>
<path d="M186.3,876 V884.5 M182,880.2 H190.5" stroke="#777" stroke-width="1.5"/>
<!-- status groups -->
<g fill="#f1f1f1">
<rect x="608.5" y="872.5" width="28" height="24.5"/>
<rect x="638" y="872.5" width="62" height="24.5"/>
<rect x="701.5" y="872.5" width="166" height="24.5"/>
<rect x="872.5" y="872.5" width="105" height="24.5"/>
<rect x="981" y="872.5" width="37" height="24.5"/>
<rect x="1020.5" y="872.5" width="25" height="24.5"/>
<rect x="1047.5" y="872.5" width="26" height="24.5"/>
<rect x="1075" y="872.5" width="49" height="24.5"/>
<rect x="1126.5" y="872.5" width="49.5" height="24.5"/>
</g>
<g fill="#cfe3f6" stroke="#4a86c0" stroke-width="1">
<rect x="705.5" y="874.5" width="21.5" height="21"/>
<rect x="808.5" y="874.5" width="21" height="21"/>
<rect x="832.5" y="874.5" width="21" height="21"/>
<rect x="874" y="874.5" width="21" height="21"/>
</g>
<g fill="none" stroke="#444" stroke-width="1.3">
<path d="M643,880 H656.5 M643,888 H656.5 M646.5,876 V892.5 M652.5,876 V892.5"/>
<path d="M709.5,879 V891.5 H723.5 M712.5,886 H716.5 V891.5"/>
<circle cx="738.5" cy="885.5" r="6"/><path d="M738.5,885.5 L746,878.5 M738.5,885.5 H744"/>
<path d="M813,891 L824,880 M813,891 H825"/>
<rect x="836" y="880.5" width="14.5" height="12"/>
<rect x="834.5" y="877.5" width="4" height="4" fill="#f1f1f1"/>
<path d="M1024.5,885 H1041.5 M1033,876.5 V893.5" stroke-width="1.8"/>
<rect x="1051.5" y="876.5" width="6.5" height="6.5" stroke-width="1"/><circle cx="1066" cy="882" r="3.8" stroke-width="1"/>
<path d="M1058,889.5 L1061.5,894 H1054.5 Z" stroke-width="1"/>
<rect x="1100.5" y="876.5" width="16" height="13" stroke-width="1.1"/>
<path d="M1101,888 L1105,881 L1109,886 L1113,879" stroke-width="1"/>
<rect x="1130.5" y="878" width="17" height="13.5" stroke-width="1.1"/>
<path d="M1134,888 L1139,883 M1134,884.5 V888 H1137.5 M1143.5,881.5 L1139.5,885.5 M1140.5,881.5 H1144 V885" stroke-width="1"/>
<path d="M1155,877.5 H1171 M1155,884.5 H1171 M1155,891.5 H1171" stroke-width="2"/>
</g>
<g fill="#444">
<circle cx="668.5" cy="878" r="1"/><circle cx="674" cy="878" r="1"/><circle cx="679.5" cy="878" r="1"/>
<circle cx="668.5" cy="884.5" r="1"/><circle cx="674" cy="884.5" r="1"/><circle cx="679.5" cy="884.5" r="1"/>
<circle cx="668.5" cy="891" r="1"/><circle cx="674" cy="891" r="1"/><circle cx="679.5" cy="891" r="1"/>
<polygon points="690.5,882.5 697,882.5 693.7,886.5"/>
<polygon points="756.5,882.5 763,882.5 759.7,886.5"/>
<polygon points="795.2,882.5 801.8,882.5 798.5,886.5"/>
<polygon points="859.8,882.5 866.3,882.5 863,886.5"/>
<polygon points="967.6,882.5 973.8,882.5 970.7,886.5"/>
<polygon points="1009.5,882.5 1015.7,882.5 1012.6,886.5"/>
<circle cx="816.5" cy="886" r="1.8"/>
<path d="M885,876 L878,893 L884.5,889 L891.5,893 Z"/>
<path d="M908.5,876 L901.5,893 L908,889 L915,893 Z"/>
<path d="M934,876 L927,893 L933.5,889 L940.5,893 Z"/>
<circle cx="992.3" cy="885" r="5.5"/>
</g>
<circle cx="992.3" cy="885" r="2.2" fill="#f1f1f1"/>
<g stroke="#444" stroke-width="2.6"><path d="M992.3,877 V893 M984.3,885 H1000.3 M986.6,879.3 L998,890.7 M998,879.3 L986.6,890.7"/></g>
<circle cx="992.3" cy="885" r="2.2" fill="#f1f1f1"/>
<path d="M771.5,878 L785,892.5" stroke="#d43030" stroke-width="1.3"/><path d="M778,876.5 V894" stroke="#2aa050" stroke-width="1.3"/>
<circle cx="778.3" cy="885.2" r="1.6" fill="#333"/>
<path d="M912,876.5 L915,881 L911,880" fill="none" stroke="#444" stroke-width="1.2"/>
<circle cx="889.5" cy="877.5" r="2" fill="none" stroke="#444" stroke-width="1"/>
<text x="950" y="890" font-size="12" fill="#444" font-family="Liberation Sans">1:1</text>
<rect x="1077.5" y="876.5" width="15" height="10" fill="#2a5fa8"/><rect x="1077.5" y="885" width="7" height="5" fill="#f5a300"/>
<path d="M1084,890 L1087.5,893 L1094.5,886" fill="none" stroke="#2aa050" stroke-width="2"/>
<polygon points="1112,888 1117,895 1107,895" fill="#f07030"/>
</svg>
<div class="a" style="left:611px;top:877px;font-size:12.5px;font-weight:bold;color:#333">模型</div>
<div class="a" style="left:27.5px;top:873.5px;font-size:12.5px;font-weight:bold;color:#333">模型</div>
<div class="a" style="left:74px;top:874px;font-size:12px;color:#777">布局1</div>
<div class="a" style="left:128px;top:874px;font-size:12px;color:#777">布局2</div>

<svg width="1181" height="904">
<!-- viewcube compass -->
<circle cx="1033.7" cy="198.7" r="50.1" fill="none" stroke="#333" stroke-width="11.2"/>
<rect x="1010" y="175" width="48" height="48" fill="#a0a0a0"/>
<rect x="1019" y="184" width="30" height="30" fill="#989898"/>
<path d="M1032.8,187 V207.5 M1019.5,207.5 H1048 M1032.8,195.5 H1046" stroke="#3a3a3a" stroke-width="1.3"/>
<rect x="1009" y="282.5" width="47.5" height="16" rx="3" fill="#8e8e98" stroke="#6a6a72" stroke-width="0.8"/>
<text x="1013" y="294.5" font-size="10" fill="#4a4a50" font-family="Liberation Sans">WCS</text>
<path d="M1041,290.5 H1051" stroke="#b0b0b8" stroke-width="1"/>
<!-- nav bar -->
<rect x="1076.2" y="325" width="31.6" height="211.5" rx="3.5" fill="#4a4a4a" fill-opacity="0.92"/>
<g fill="none" stroke="#2c2c2c" stroke-width="1.3">
<circle cx="1101" cy="330.5" r="2.5"/><circle cx="1101" cy="531" r="2.5"/>
<circle cx="1092" cy="355.5" r="9.5"/><circle cx="1092" cy="355.5" r="5.5"/><path d="M1092,346 Q1101,344 1101.5,355"/>
<path d="M1080,376.5 H1104 M1080,379.5 H1104" stroke="#333" stroke-width="0.8"/>
<path d="M1083,399 Q1081,392 1084,391 Q1086,391 1087,395 V386 Q1087,384 1089,384 Q1091,384 1091,386 V392 V385 Q1091,383 1093,383 Q1095,383 1095,385 V392 V386 Q1095,384 1097,384 Q1099,384 1099,386 V393 V389 Q1099,388 1101,388 Q1102,389 1102,391 V399 Q1101,407 1093,407 Q1086,407 1083,399 Z"/>
<path d="M1080,415 L1096,431 M1096,415 L1080,431 M1080,415 V420 M1080,415 H1085 M1096,415 H1091 M1096,415 V420 M1080,431 V426 M1080,431 H1085"/>
<circle cx="1096" cy="430" r="4"/><path d="M1099,433 L1104,438"/>
<path d="M1092,453 V477 M1088,458 V473 Q1092,476 1096,473 V458 Q1092,456 1088,458 Z"/>
<ellipse cx="1092" cy="466" rx="13" ry="4.5"/>
<path d="M1080,489 H1104"/>
<rect x="1080.5" y="491.5" width="6" height="5"/><rect x="1088.5" y="491.5" width="6" height="5"/><rect x="1096.5" y="491.5" width="6" height="5"/>
<rect x="1080.5" y="499.5" width="17" height="16"/>
</g>
<polygon points="1086,502 1094,507.5 1086,513" fill="#2c2c2c"/>
<line x1="1076.2" y1="368.7" x2="1107.8" y2="368.7" stroke="#8a5a8e" stroke-width="1.2" stroke-opacity="0.8"/>
<g fill="#2c2c2c"><circle cx="1092" cy="372.5" r="1.2"/><circle cx="1092" cy="444" r="1.3"/><circle cx="1092" cy="483" r="1.3"/></g>
<!-- ucs -->
<g fill="none" stroke="#ececec" stroke-width="1.8">
<path d="M66.5,724 V774.3 H116.7"/>
<rect x="62.2" y="769.3" width="9.6" height="9.4"/>
<path d="M68.1,707.1 L74.4,713.7 L81,707.1 M74.4,713.7 V719.7"/>
<path d="M121.2,760.2 L133.9,772.8 M133.9,760.2 L121.2,772.8"/>
</g>
<!-- scroll arrows -->
<g fill="none" stroke="#333" stroke-width="2">
<path d="M1116.5,134 L1120,130.5 L1123.5,134"/>
<path d="M1116.5,782 L1120,785.5 L1123.5,782"/>
<path d="M60,796.5 L56.5,800 L60,803.5"/>
<path d="M1102,796.5 L1105.5,800 L1102,803.5"/>
</g>
</svg>
<div class="a" style="left:1024.5px;top:135.5px;font-size:17px;color:#c4c4c4">北</div>
<div class="a" style="left:971.5px;top:188px;font-size:17px;color:#c4c4c4">西</div>
<div class="a" style="left:1076.5px;top:188px;font-size:17px;color:#c4c4c4">东</div>
<div class="a" style="left:1024.5px;top:241px;font-size:17px;color:#c4c4c4">南</div>

</body></html>
